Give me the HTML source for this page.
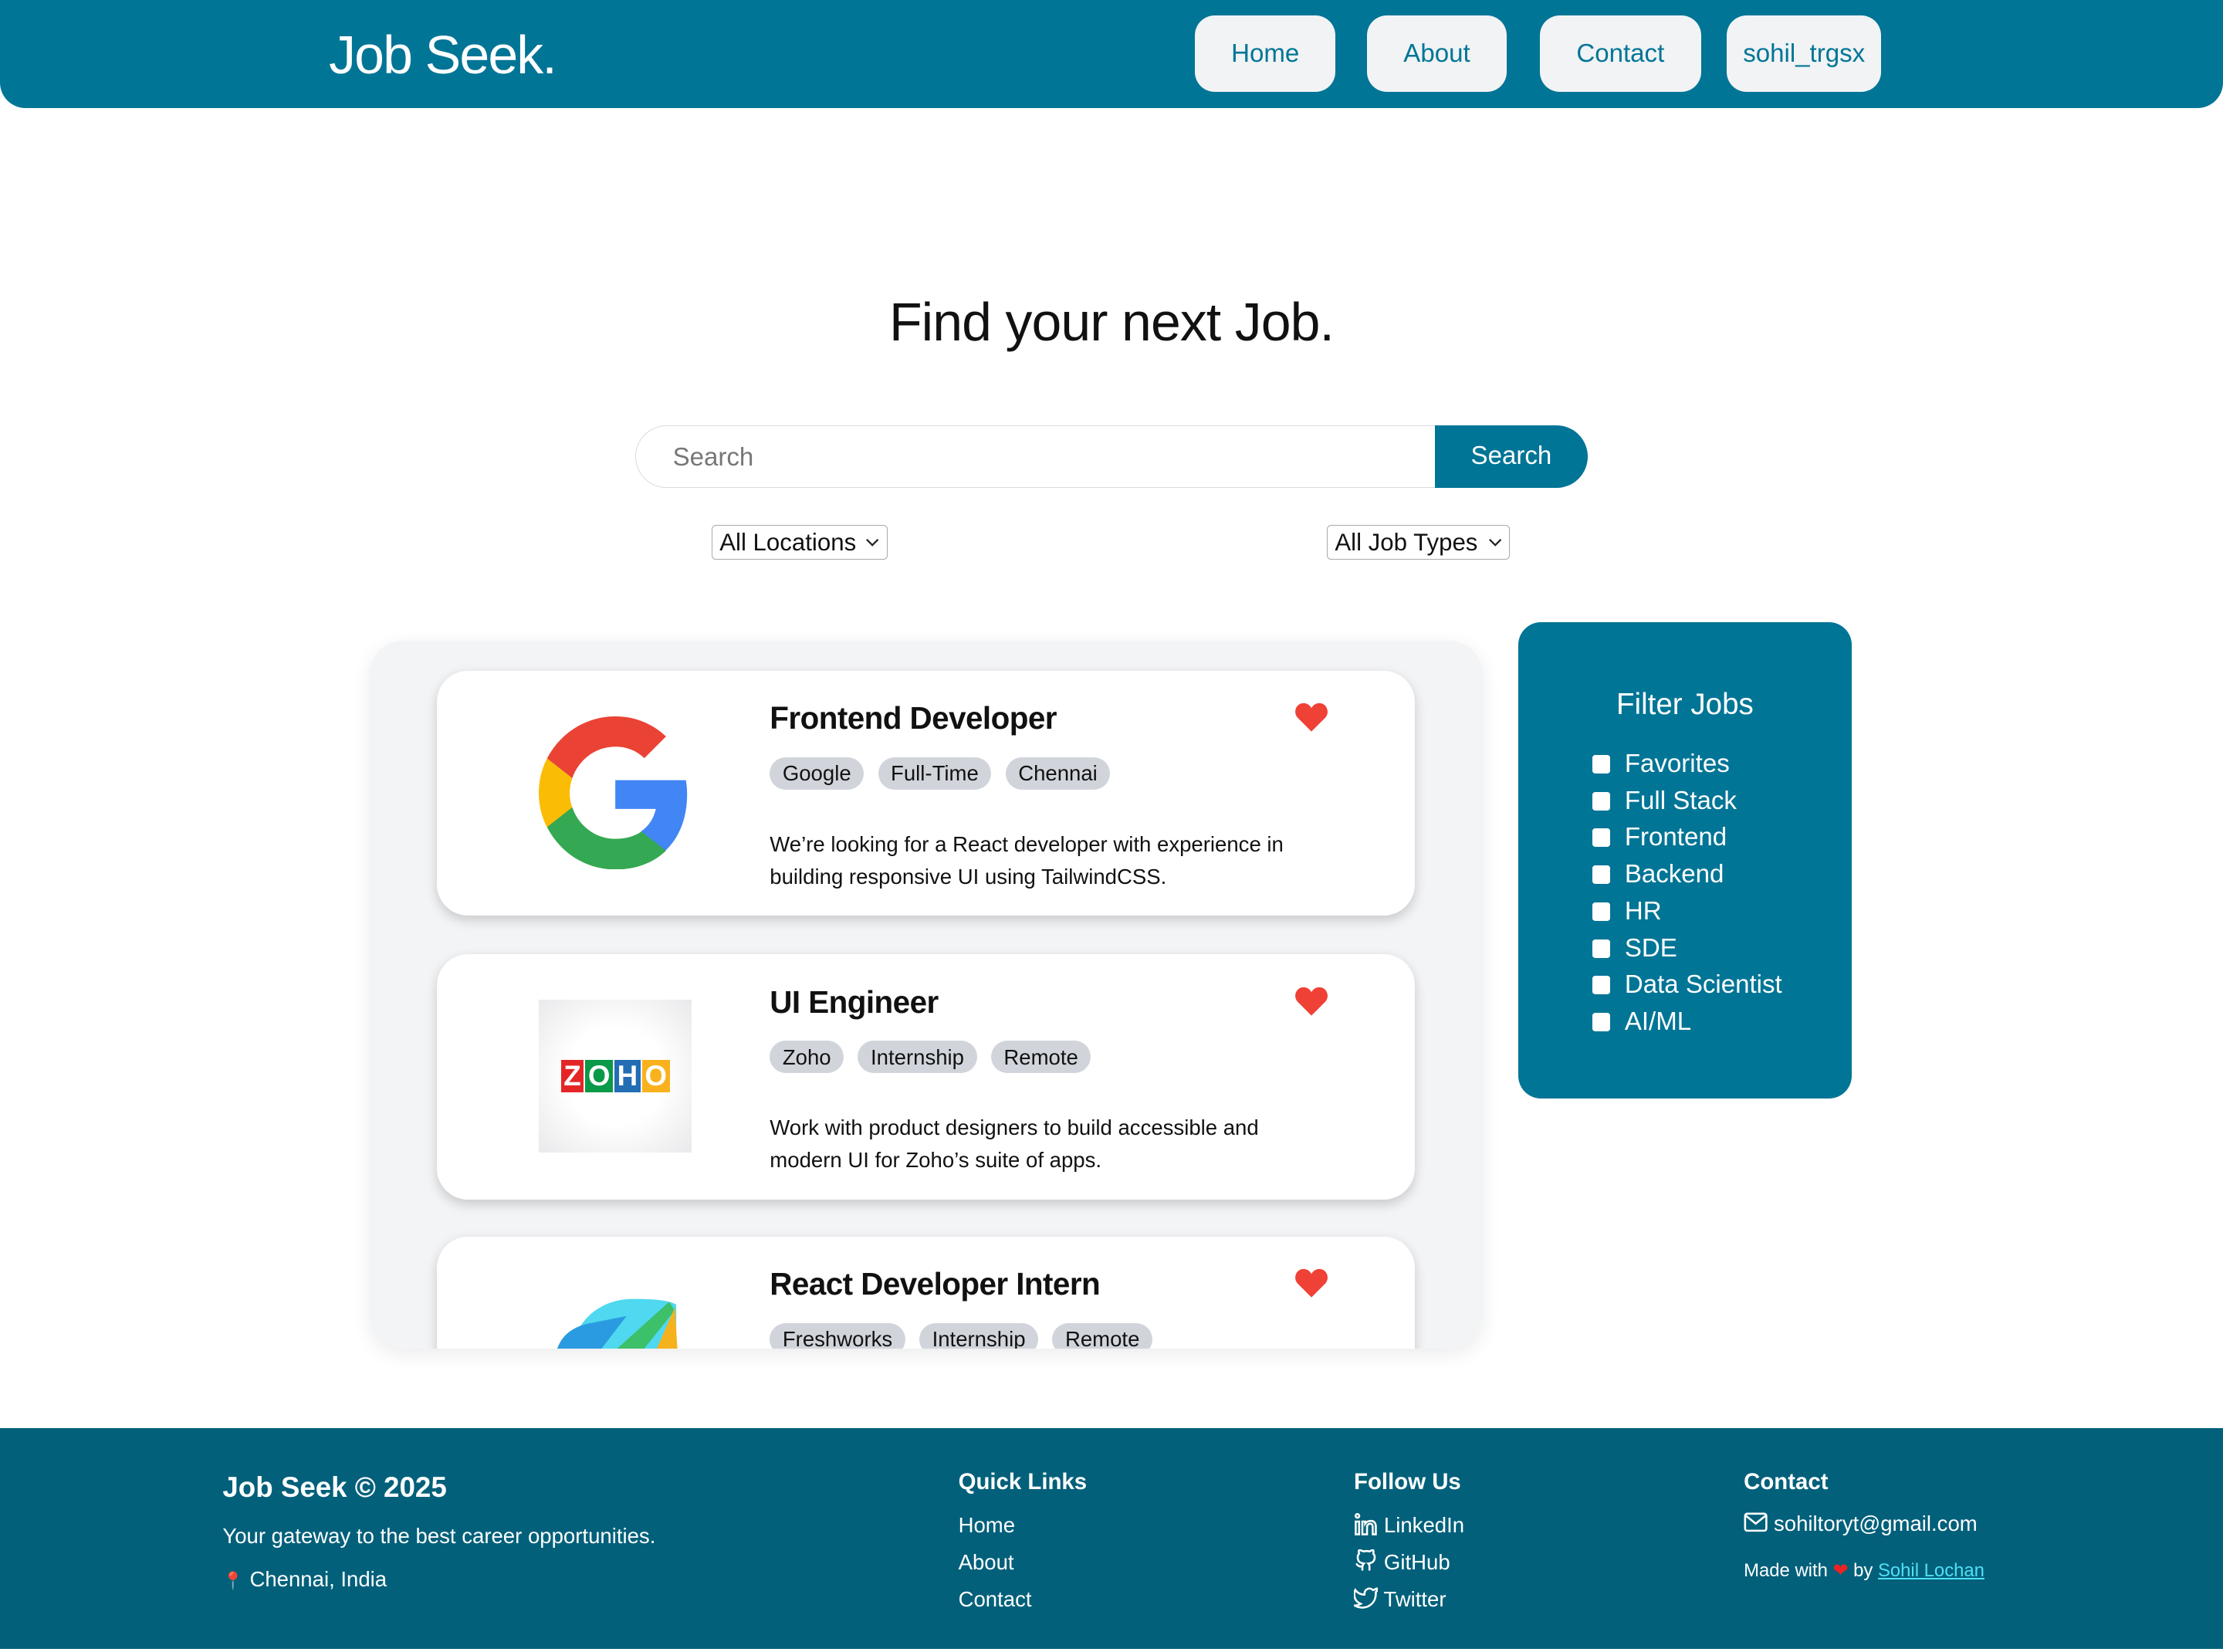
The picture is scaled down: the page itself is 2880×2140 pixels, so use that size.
<!DOCTYPE html>
<html><head><meta charset="utf-8"><style>
*{box-sizing:border-box;margin:0;padding:0}
html,body{width:2880px;height:2140px;overflow:hidden;background:#fff}
#w{zoom:1.8367;width:1568px;height:1165px;position:relative;font-family:"Liberation Sans",Arial,sans-serif;color:#111}
.a{position:absolute}
header{position:absolute;left:0;top:0;width:1568px;height:76px;background:#017596;border-radius:0 0 18px 18px}
.logo{left:232px;top:17px;font-size:38px;color:#fff;letter-spacing:-1px}
.nb{top:11px;height:54px;background:#f1f3f5;border-radius:14px;color:#017596;font-size:18px;display:flex;align-items:center;justify-content:center}
h1{position:absolute;left:0;width:1568px;text-align:center;top:205px;font-size:38px;font-weight:normal;letter-spacing:-0.5px}
.inp{left:448px;top:300px;width:566px;height:44px;border:1px solid #d8dbe0;border-right:none;border-radius:22px 0 0 22px;color:#777;font-size:18px;padding:12px 26px}
.btn{left:1012px;top:300px;width:108px;height:44px;background:#017596;color:#fff;border-radius:0 22px 22px 0;font-size:18px;display:flex;align-items:center;justify-content:center}
.sel{top:370px;height:25px;border:1px solid #aaa;border-radius:3px;font-size:17px;padding:2px 5px;background:#fff;white-space:nowrap;display:flex;align-items:center;justify-content:space-between}
.list{left:261px;top:452px;width:785px;height:499px;background:#f3f4f6;border-radius:24px;overflow:hidden;box-shadow:0 4px 14px rgba(0,0,0,.08)}
.card{position:absolute;left:47px;width:690px;height:173px;background:#fff;border-radius:22px;box-shadow:0 3px 8px rgba(0,0,0,.18)}
.t{position:absolute;left:235px;top:21px;font-size:22px;font-weight:bold;letter-spacing:-0.3px}
.tags{position:absolute;left:235px;top:61px;display:flex;gap:10px}
.tags span{background:#d1d5db;border-radius:12px;font-size:15px;padding:3px 9px;height:23px}
.d{position:absolute;left:235px;top:111px;font-size:15px;line-height:23px;width:385px}
.h{position:absolute;left:605px;top:22px}
.lg{position:absolute;left:72px;top:32px;width:108px;height:108px}
.filter{left:1071px;top:439px;width:235px;height:336px;background:#017596;border-radius:16px;color:#fff}
.filter h3{font-weight:normal;font-size:21px;text-align:center;margin-top:46px}
.filter ul{list-style:none;margin:17px 0 0 52px}
.filter li{font-size:18px;height:26px;display:flex;align-items:center}
.filter li i{display:inline-block;width:13px;height:13px;background:#fff;border-radius:2px;margin-right:10px}
footer{position:absolute;left:0;top:1007px;width:1568px;height:156px;background:#02607a;color:#fff}
.fh{font-weight:bold;font-size:16px}
.fl{font-size:15px}
</style></head><body><div id="w">
<header>
<div class="a logo">Job Seek.</div>
<div class="a nb" style="left:843px;width:99px">Home</div>
<div class="a nb" style="left:964px;width:99px">About</div>
<div class="a nb" style="left:1086px;width:114px">Contact</div>
<div class="a nb" style="left:1218px;width:109px">sohil_trgsx</div>
</header>
<h1>Find your next Job.</h1>
<div class="a inp">Search</div>
<div class="a btn">Search</div>
<div class="a sel" style="left:502px;width:124px">All Locations<svg width="10" height="6" viewBox="0 0 10 6"><path d="M1 1l4 4 4-4" fill="none" stroke="#222" stroke-width="1.2"/></svg></div>
<div class="a sel" style="left:936px;width:129px">All Job Types<svg width="10" height="6" viewBox="0 0 10 6"><path d="M1 1l4 4 4-4" fill="none" stroke="#222" stroke-width="1.2"/></svg></div>

<div class="a list">
 <div class="card" style="top:21px">
  <svg class="lg" viewBox="0 0 48 48"><path fill="#EA4335" d="M24 9.5c3.5 0 6.6 1.2 9.1 3.6l6.8-6.8C35.8 2.4 30.3 0 24 0 14.6 0 6.6 5.4 2.6 13.2l7.9 6.2C12.4 13.7 17.7 9.5 24 9.5z"/><path fill="#4285F4" d="M46.5 24.5c0-1.6-.1-3.1-.4-4.5H24v9h12.7c-.6 2.9-2.2 5.4-4.7 7.1l7.7 6C44.1 38 46.5 31.8 46.5 24.5z"/><path fill="#FBBC05" d="M10.5 28.6c-.5-1.4-.8-3-.8-4.6s.3-3.2.8-4.6l-7.9-6.2C.9 16.5 0 20.1 0 24s.9 7.5 2.6 10.8l7.9-6.2z"/><path fill="#34A853" d="M24 48c6.5 0 11.9-2.1 15.9-5.9l-7.7-6c-2.2 1.5-4.9 2.3-8.2 2.3-6.3 0-11.6-4.2-13.5-9.9l-7.9 6.2C6.6 42.6 14.6 48 24 48z"/></svg>
  <div class="t">Frontend Developer</div>
  <svg class="h" width="24" height="22" viewBox="0 0 24 22"><path fill="#ef4136" d="M12 21 2 11C-1 7.5 1 1 6.5 1 9 1 11 2.5 12 4.5 13 2.5 15 1 17.5 1 23 1 25 7.5 22 11z"/></svg>
  <div class="tags"><span>Google</span><span>Full-Time</span><span>Chennai</span></div>
  <div class="d">We’re looking for a React developer with experience in building responsive UI using TailwindCSS.</div>
 </div>
 <div class="card" style="top:221px">
  <div class="lg" style="background:radial-gradient(circle,#fff 45%,#e9e9eb 100%);display:flex;align-items:center;justify-content:center;font-weight:bold;font-size:20px;gap:1px">
   <span style="background:#e42527;color:#fff;padding:0 2px">Z</span><span style="background:#089949;color:#fff;padding:0 2px">O</span><span style="background:#226db4;color:#fff;padding:0 2px">H</span><span style="background:#f9b21d;color:#fff;padding:0 2px">O</span></div>
  <div class="t">UI Engineer</div>
  <svg class="h" width="24" height="22" viewBox="0 0 24 22"><path fill="#ef4136" d="M12 21 2 11C-1 7.5 1 1 6.5 1 9 1 11 2.5 12 4.5 13 2.5 15 1 17.5 1 23 1 25 7.5 22 11z"/></svg>
  <div class="tags"><span>Zoho</span><span>Internship</span><span>Remote</span></div>
  <div class="d">Work with product designers to build accessible and modern UI for Zoho’s suite of apps.</div>
 </div>
 <div class="card" style="top:420px">
  <svg class="a" style="left:84px;top:42px" width="86" height="40" viewBox="0 0 86 40"><path fill="#4fd8f0" d="M10 40C14 18 30 2 55 2c15 0 25 1 30 4V40z"/><path fill="#2a9be0" d="M0 40C3 30 8 24 20 20L50 14 30 40z"/><path fill="#3cc06a" d="M40 40 80 4 84 10 60 40z"/><path fill="#f6b21c" d="M70 40 84 8 86 40z"/></svg>
  <div class="t">React Developer Intern</div>
  <svg class="h" width="24" height="22" viewBox="0 0 24 22"><path fill="#ef4136" d="M12 21 2 11C-1 7.5 1 1 6.5 1 9 1 11 2.5 12 4.5 13 2.5 15 1 17.5 1 23 1 25 7.5 22 11z"/></svg>
  <div class="tags"><span>Freshworks</span><span>Internship</span><span>Remote</span></div>
 </div>
</div>

<div class="a filter">
<h3>Filter Jobs</h3>
<ul><li><i></i>Favorites</li><li><i></i>Full Stack</li><li><i></i>Frontend</li><li><i></i>Backend</li><li><i></i>HR</li><li><i></i>SDE</li><li><i></i>Data Scientist</li><li><i></i>AI/ML</li></ul>
</div>

<footer>
<div class="a" style="left:157px;top:31px;font-size:20px;font-weight:bold">Job Seek © 2025</div>
<div class="a fl" style="left:157px;top:68px">Your gateway to the best career opportunities.</div>
<div class="a fl" style="left:157px;top:98px"><span style="color:#e33;font-size:12px">📍</span> Chennai, India</div>
<div class="a fh" style="left:676px;top:29px">Quick Links</div>
<div class="a fl" style="left:676px;top:56px;line-height:26px">Home<br>About<br>Contact</div>
<div class="a fh" style="left:955px;top:29px">Follow Us</div>
<div class="a fl" style="left:955px;top:56px;line-height:26px">
<svg width="17" height="16" viewBox="0 0 17 16" fill="none" stroke="#fff" stroke-width="1.4" style="vertical-align:-2px"><circle cx="2.5" cy="2" r="1.3"/><path d="M1.3 6h2.4v9H1.3zM6 15V6h2v1.5c1-1.5 2.5-2 4-2 2.5 0 3.5 2 3.5 4V15h-2.2V10c0-1.5-.6-2.5-1.8-2.5S9.3 8.5 9.3 10v5z"/></svg> LinkedIn<br>
<svg width="17" height="16" viewBox="0 0 17 16" fill="none" stroke="#fff" stroke-width="1.4" style="vertical-align:-2px"><path d="M6 15v-3c-3 .6-3.5-1.3-4.5-1.8M11 15v-3c0-1-.3-1.5-.8-2 2.5-.3 4.5-1.3 4.5-4.5 0-1-.3-1.8-1-2.5.2-.8.2-1.7-.1-2.5 0 0-1 0-2.5 1-1.3-.4-2.8-.4-4.2 0C4.7.5 3.700.5 3.7.5c-.3.8-.3 1.7 0 2.5C3 3.7 2.7 4.5 2.7 5.5 2.7 8.7 4.5 9.7 7 10c-.5.5-.8 1-.8 2"/></svg> GitHub<br>
<svg width="17" height="16" viewBox="0 0 17 16" fill="none" stroke="#fff" stroke-width="1.4" style="vertical-align:-2px"><path d="M16 1.5c-.8.5-1.6.9-2.5 1.1A3.5 3.5 0 0 0 7.5 5v.8A8.3 8.3 0 0 1 1 2.5s-3 6.8 3.8 9.8A8.7 8.7 0 0 1 .5 13.5c6.8 3.8 15 0 15-8.700 0-.2 0-.4-.1-.6.8-.8 1.3-1.7 1.6-2.7z"/></svg> Twitter</div>
<div class="a fh" style="left:1230px;top:29px">Contact</div>
<div class="a fl" style="left:1230px;top:59px"><svg width="17" height="14" viewBox="0 0 17 14" fill="none" stroke="#fff" stroke-width="1.4" style="vertical-align:-1px"><rect x="1" y="1" width="15" height="12" rx="1.5"/><path d="M1 2l7.5 6L16 2"/></svg> sohiltoryt@gmail.com</div>
<div class="a" style="left:1230px;top:93px;font-size:13px">Made with <span style="color:#e22">❤</span> by <span style="color:#4fe0f5;text-decoration:underline">Sohil Lochan</span></div>
</footer>
</div></body></html>
